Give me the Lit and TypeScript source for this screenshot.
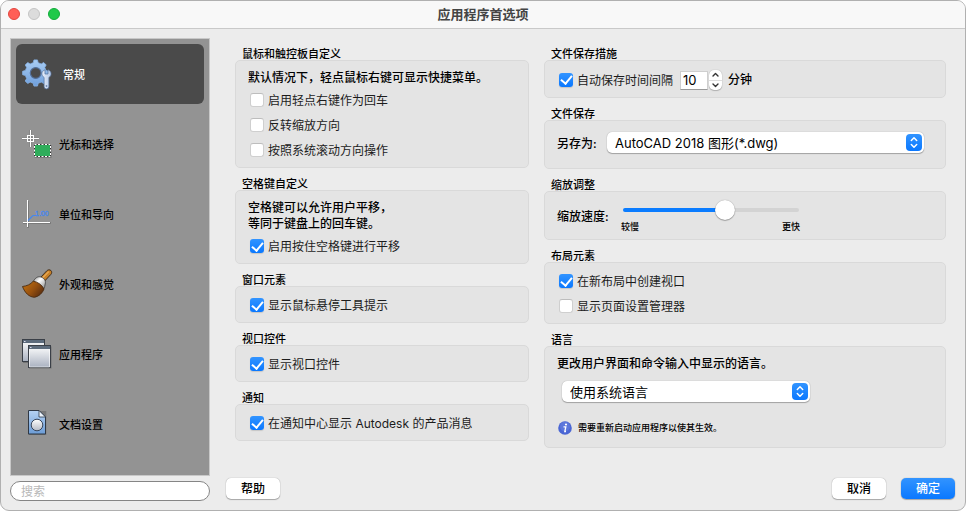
import { LitElement, html, css, svg, nothing, TemplateResult } from "lit";
import { customElement, property, state } from "lit/decorators.js";
import { classMap } from "lit/directives/class-map.js";
import { styleMap } from "lit/directives/style-map.js";

const controlStyles = css`
  * {
    box-sizing: border-box;
  }
  button,
  input,
  select {
    font: inherit;
    color: inherit;
    margin: 0;
  }
`;

/* Outline of a cog with the given number of teeth. */
function cogPath(cx: number, cy: number, outer: number, inner: number, teeth: number): string {
  const step = (Math.PI * 2) / teeth;
  const at = (r: number, a: number) =>
    `${(cx + r * Math.cos(a)).toFixed(2)} ${(cy + r * Math.sin(a)).toFixed(2)}`;
  let d = "";
  for (let i = 0; i < teeth; i++) {
    const a = i * step - Math.PI / 2;
    d += `${i ? "L" : "M"}${at(inner, a - step * 0.3)}L${at(outer, a - step * 0.17)}`;
    d += `L${at(outer, a + step * 0.17)}L${at(inner, a + step * 0.3)}`;
  }
  return d + "Z";
}

const icons: Record<string, TemplateResult> = {
  general: svg`
    <defs>
      <linearGradient id="cog" x1="0" y1="0" x2="0" y2="1">
        <stop offset="0" stop-color="#a9cdf3" /><stop offset="1" stop-color="#6f9fdc" />
      </linearGradient>
      <linearGradient id="wrench" x1="0" y1="0" x2="1" y2="0">
        <stop offset="0" stop-color="#e6eefb" /><stop offset="1" stop-color="#b3c6e4" />
      </linearGradient>
    </defs>
    <path d=${cogPath(13.7, 14, 13.2, 10.6, 8)} fill="url(#cog)" stroke="#86b2e6" stroke-width=".8" stroke-linejoin="round" />
    <circle cx="13.7" cy="14" r="5.4" fill="#4a4a4a" stroke="#54709a" stroke-width="1.2" />
    <path d="M23 10.800v4.200h3v-4.200c1.900.7 3.100 2.100 3.100 4 0 1.700-.9 2.900-2.200 3.600v9.100a2.300 2.300 0 0 1-4.800 0v-9.100c-1.300-.7-2.200-1.900-2.200-3.600 0-1.900 1.200-3.300 3.100-4Z"
      fill="url(#wrench)" stroke="#55719c" stroke-width=".7" />
    <circle cx="24.500" cy="27" r=".9" fill="#6d87b0" />`,
  cursor: svg`
    <rect x="12.500" y="16" width="17" height="13" fill="#666" opacity=".6" />
    <path d="M8.500 1v17M0 9.500h17" stroke="#6a6a6a" stroke-width="2.200" opacity=".5" />
    <path d="M8.500 1v17M0 9.500h17" stroke="#fff" />
    <rect x="5.500" y="6.500" width="6" height="6" fill="none" stroke="#fff" />
    <rect x="12.500" y="15.500" width="16" height="12" fill="#2fad5b" stroke="#333" />
    <rect x="12.500" y="15.500" width="16" height="12" fill="none" stroke="#fff" stroke-dasharray="2 1.500" />`,
  units: svg`
    <path d="M6 2v27M1 24h28" stroke="#555" stroke-width="2" opacity=".4" />
    <path d="M5.500 1v27M1 23.500h27" stroke="#fff" />
    <path d="M6 21.500l5-5h3" fill="none" stroke="#4687ee" stroke-width="1.200" />
    <text x="13" y="17" class="tiny">1.00</text>`,
  brush: svg`
    <defs>
      <linearGradient id="bristle" x1="0" y1="0" x2="1" y2=".6">
        <stop offset="0" stop-color="#c8760f" /><stop offset=".6" stop-color="#96500f" /><stop offset="1" stop-color="#5e3010" />
      </linearGradient>
      <linearGradient id="ferrule" x1="0" y1="0" x2="1" y2="1">
        <stop offset="0" stop-color="#888" /><stop offset=".4" stop-color="#fff" /><stop offset="1" stop-color="#888" />
      </linearGradient>
    </defs>
    <path d="M18.500 8.500l6.200-6.600c1.300-1.300 3-1.400 4.200-.4 1.100 1.100 1 2.800-.2 4.100l-6.400 6.800Z" fill="#c98127" stroke="#3f2b17" />
    <path d="M20.500 9l6.300-6.300" stroke="#e9ad59" stroke-width="1.200" />
    <path d="M11.500 12.500c1.300-3.500 4.500-5.500 7.500-4.500 3.500 1.300 5 4 4.200 7-.3 1.800-.6 3.300-1.400 4.800Z" fill="url(#ferrule)" stroke="#3d3d3d" stroke-width=".8" />
    <path d="M.5 17.500c4.500-.6 8-2 10.700-5.300 4.500.7 8.600 3.500 10.800 7.800-1.500 4-5 7.500-9.500 8.300C7 28 3 24 .5 17.500Z" fill="url(#bristle)" stroke="#4a2a10" stroke-width=".9" />`,
  windows: svg`
    <defs>
      <linearGradient id="pane" x1="0" y1="0" x2="0" y2="1">
        <stop offset="0" stop-color="#fff" /><stop offset="1" stop-color="#a9b1c0" />
      </linearGradient>
    </defs>
    <rect x="1" y="1" width="22" height="23" fill="#444" opacity=".4" />
    <rect x=".5" y=".5" width="22" height="22" fill="url(#pane)" stroke="#3a3f47" />
    <path d="M1 2.500h21" stroke="#5c6b7c" stroke-width="3" /><path d="M2 2.500h1.500" stroke="#dde" />
    <rect x="7" y="7.500" width="22.500" height="22" fill="#444" opacity=".4" />
    <rect x="6.500" y="6.500" width="22" height="22" fill="url(#pane)" stroke="#3a3f47" />
    <path d="M7 8.500h21" stroke="#5c6b7c" stroke-width="3" /><path d="M8 8.500h1.500" stroke="#dde" />
    <path d="M7.500 10.500v17.500h20V10.500" fill="none" stroke="#fff" opacity=".6" />`,
  document: svg`
    <defs>
      <linearGradient id="page" x1="0" y1="0" x2="0" y2="1">
        <stop offset="0" stop-color="#b5d2f3" /><stop offset="1" stop-color="#6c9cd6" />
      </linearGradient>
      <linearGradient id="disc" x1="0" y1="0" x2="0" y2="1">
        <stop offset="0" stop-color="#fff" /><stop offset="1" stop-color="#b4b9c4" />
      </linearGradient>
    </defs>
    <path d="M6.500 2h17.800v24H6.500Z" fill="#444" opacity=".35" />
    <path d="M6.500 1.500h10.500l6.500 6.500v17h-17Z" fill="url(#page)" stroke="#2f3845" />
    <path d="M17 1.500v6.500h6.500Z" fill="#eef5fd" stroke="#2f3845" stroke-width=".8" />
    <circle cx="15" cy="16" r="5.800" fill="url(#disc)" stroke="#39465a" />`,
};

@customElement("pref-group")
class PrefGroup extends LitElement {
  @property() heading = "";

  static styles = css`
    :host {
      display: block;
    }
    .group {
      border: 0;
      margin: 0;
      padding: 0;
      min-width: 0;
    }
    .title {
      display: block;
      box-sizing: border-box;
      height: 22px;
      padding: 10px 0 0 7px;
      font-size: 11px;
      font-weight: 500;
      line-height: 12px;
    }
    .box {
      border: 1px solid #d9d9d9;
      border-radius: 5px;
      background: #e4e4e4;
      padding: 6px 12px 4px;
    }
  `;

  render() {
    return html`<fieldset class="group">
      <legend class="title">${this.heading}</legend>
      <div class="box"><slot></slot></div>
    </fieldset>`;
  }
}

@customElement("pref-check")
class PrefCheck extends LitElement {
  @property() label = "";
  @property({ type: Boolean }) checked = false;

  static styles = [
    controlStyles,
    css`
      :host {
        display: block;
      }
      .row {
        display: flex;
        align-items: center;
        gap: 4px;
        height: 25px;
        padding: 0 0 1px 2px;
        color: #1c1c1c;
      }
      .caption {
        padding-top: 2px;
      }
      .tick {
        appearance: none;
        flex: none;
        display: grid;
        place-items: center;
        width: 14px;
        height: 14px;
        border: 1px solid #cfcfcf;
        border-top-color: #bdbdbd;
        border-radius: 3px;
        background: #fff;
      }
      .tick:checked {
        border: 0;
        background: linear-gradient(#3294ff, #0a78ff);
        box-shadow: 0 1px 1px #0002;
      }
      .tick:checked::after {
        content: "";
        width: 5px;
        height: 9px;
        margin-bottom: 2px;
        border: solid #fff;
        border-width: 0 2px 2px 0;
        transform: rotate(40deg);
      }
    `,
  ];

  render() {
    return html`<label class="row">
      <input class="tick" type="checkbox" .checked=${this.checked}
        @change=${(e: Event) => (this.checked = (e.target as HTMLInputElement).checked)} />
      <span class="caption">${this.label}</span>
    </label>`;
  }
}

@customElement("pref-select")
class PrefSelect extends LitElement {
  @property() label = "";
  @property({ attribute: false }) options: string[] = [];

  static styles = [
    controlStyles,
    css`
      :host {
        display: block;
      }
      .wrap {
        position: relative;
      }
      .menu {
        appearance: none;
        display: block;
        width: 100%;
        height: 21px;
        padding: 1px 24px 0 8px;
        border: 0;
        border-radius: 5px;
        background: #fff;
        box-shadow: 0 0 1px #0005, 0 1px 1px #0004;
        font-size: 13px;
      }
      .cap {
        position: absolute;
        top: 2px;
        right: 2px;
        pointer-events: none;
      }
    `,
  ];

  render() {
    return html`<div class="wrap">
      <select class="menu" aria-label=${this.label}>
        ${this.options.map((o) => html`<option>${o}</option>`)}
      </select>
      <svg class="cap" width="16" height="17" viewBox="0 0 16 17" aria-hidden="true">
        <defs>
          <linearGradient id="cap" x1="0" y1="0" x2="0" y2="1">
            <stop offset="0" stop-color="#3294ff" /><stop offset="1" stop-color="#0a78ff" />
          </linearGradient>
        </defs>
        <rect width="16" height="17" rx="4" fill="url(#cap)" />
        <path d="M5.300 6.500L8 3.800l2.700 2.700M5.300 10.500L8 13.200l2.700-2.700" fill="none" stroke="#fff" stroke-width="1.500" stroke-linecap="round" stroke-linejoin="round" />
      </svg>
    </div>`;
  }
}

@customElement("app-root")
class AppRoot extends LitElement {
  @state() private section = "general";
  @state() private speed = 59;
  @state() private minutes = 10;

  private sections = [
    { id: "general", name: "常规" },
    { id: "cursor", name: "光标和选择" },
    { id: "units", name: "单位和导向" },
    { id: "brush", name: "外观和感觉" },
    { id: "windows", name: "应用程序" },
    { id: "document", name: "文档设置" },
  ];

  static styles = [
    controlStyles,
    css`
      :host {
        display: block;
        background: #fff;
        color: #000;
        font: 12px/16px Inter, "Noto Sans CJK SC", sans-serif;
      }
      .window {
        display: flex;
        flex-direction: column;
        min-height: 100vh;
        border: 1px solid #b0b0b0;
        border-radius: 9px;
        background: #ececec;
        overflow: hidden;
      }
      .titlebar {
        display: grid;
        grid-template-columns: 1fr auto 1fr;
        align-items: center;
        height: 28px;
        padding: 0 7px 2px;
        border-bottom: 1px solid #c9c9c9;
        background: #f8f8f8;
      }
      .title {
        margin: 0;
        font-size: 13px;
        font-weight: 700;
        color: #444;
      }
      .lights {
        display: flex;
        gap: 8px;
      }
      .light {
        width: 12px;
        height: 12px;
        padding: 0;
        border: 1px solid #c4c4c4;
        border-radius: 50%;
        background: #dcdcdc;
      }
      .light.close {
        border-color: #e2463f;
        background: #ff5f57;
      }
      .light.grow {
        border-color: #12ac3a;
        background: #1fc94a;
      }
      .body {
        flex: 1;
        display: grid;
        grid-template-columns: 200px minmax(0, 1fr);
        padding: 9px 0 9px 9px;
      }
      .side {
        display: flex;
        flex-direction: column;
        gap: 5px;
      }
      .nav {
        flex: 1;
        display: flex;
        flex-direction: column;
        gap: 10px;
        padding: 5px;
        border: 1px solid #c8c8c8;
        background: #939393;
      }
      .item {
        display: flex;
        align-items: center;
        gap: 7px;
        height: 60px;
        padding: 0 6px;
        border: 0;
        border-radius: 6px;
        background: none;
        font-size: 11px;
        font-weight: 500;
      }
      .item.current {
        gap: 11px;
        background: #4a4a4a;
        color: #fff;
      }
      .name {
        padding-top: 2px;
      }
      .icon {
        flex: none;
        overflow: visible;
      }
      .tiny {
        font: 7px "Liberation Sans", sans-serif;
        fill: #4687ee;
        stroke: #4687ee;
        stroke-width: 0.3px;
      }
      .search {
        width: 100%;
        height: 20px;
        padding: 1px 10px 0;
        border: 1px solid #858585;
        border-radius: 10px;
        background: #fff;
      }
      .search::placeholder {
        color: #b8b8b8;
      }
      .main {
        display: flex;
        flex-direction: column;
        justify-content: space-between;
      }
      .groups {
        display: grid;
        grid-template-columns: minmax(0, 294fr) minmax(0, 402fr);
        gap: 15px;
        padding: 0 19px 0 25px;
      }
      .text {
        margin: 3px 0 2px;
        font-weight: 500;
      }
      .line {
        display: block;
      }
      .autosave {
        display: flex;
        align-items: center;
        height: 26px;
      }
      .autosave-check {
        min-width: 123px;
      }
      .minutes {
        width: 28px;
        height: 19px;
        padding: 0 2px;
        border: 1px solid #cfcfcf;
        border-bottom-color: #9a9a9a;
        background: #fff;
        font-size: 13px;
      }
      .stepper {
        display: flex;
        flex-direction: column;
        width: 13px;
        height: 20px;
        margin: 0 6px 0 1px;
        border-radius: 5px;
        background: #fff;
        box-shadow: 0 0 1px #0005, 0 1px 1px #0003;
      }
      .step {
        flex: 1;
        display: grid;
        place-items: center;
        min-height: 0;
        padding: 0;
        border: 0;
        background: none;
      }
      .step + .step {
        border-top: 1px solid #ddd;
      }
      .unit {
        font-weight: 500;
      }
      .save-as {
        display: flex;
        align-items: center;
        gap: 10px;
        margin: 5px 9px 11px 0;
      }
      .field-label {
        flex: none;
        min-width: 40px;
        padding-top: 2px;
        font-weight: 500;
      }
      .save-select {
        flex: 1;
      }
      .zoom {
        display: flex;
        align-items: center;
        gap: 12px;
        padding: 2px 0 1px;
      }
      .zoom-label {
        min-width: 54px;
        font-weight: 500;
      }
      .slider {
        width: 176px;
      }
      .range {
        appearance: none;
        display: block;
        width: 100%;
        height: 20px;
        background: none;
      }
      .range::-webkit-slider-runnable-track {
        height: 4px;
        border-radius: 2px;
        background: linear-gradient(to right, #0a7cff var(--fill), #d3d3d3 var(--fill));
      }
      .range::-webkit-slider-thumb {
        appearance: none;
        width: 20px;
        height: 20px;
        margin-top: -8px;
        border-radius: 50%;
        background: #fff;
        box-shadow: 0 0 1px #0006, 0 1px 1px #0004;
      }
      .scale {
        display: flex;
        justify-content: space-between;
        margin: 0 -1px 0 -2px;
        font-size: 9px;
        font-weight: 500;
        line-height: 14px;
      }
      .language {
        width: 248px;
        max-width: 100%;
        margin: 9px 0 19px 5px;
      }
      .note {
        display: flex;
        align-items: center;
        gap: 6px;
        margin: 0 0 8px 1px;
        font-size: 9px;
        font-weight: 500;
        line-height: 14px;
      }
      .footer {
        display: flex;
        gap: 15px;
        padding: 0 10px 2px 16px;
      }
      .button {
        width: 54px;
        height: 21px;
        padding: 1px 0 0;
        border: 0;
        border-radius: 5px;
        background: #fff;
        box-shadow: 0 0 1px #0006, 0 1px 1px #0004;
        font-weight: 500;
      }
      .button.help {
        margin-right: auto;
      }
      .button.primary {
        background: linear-gradient(#3294ff, #0a78ff);
        color: #fff;
      }
    `,
  ];

  private chevron(d: string) {
    return html`<svg width="7" height="5" viewBox="0 0 7 5" aria-hidden="true">
      <path d=${d} fill="none" stroke="#333" stroke-width="1.400" stroke-linecap="round" stroke-linejoin="round" />
    </svg>`;
  }

  render() {
    return html`
      <div class="window">
        <header class="titlebar">
          <div class="lights">
            <button class="light close" aria-label="关闭"></button>
            <button class="light" aria-label="最小化"></button>
            <button class="light grow" aria-label="缩放"></button>
          </div>
          <h1 class="title">应用程序首选项</h1>
        </header>
        <div class="body">
          <div class="side">
            <nav class="nav">
              ${this.sections.map(
                (s) => html`<button
                  class=${classMap({ item: true, current: s.id === this.section })}
                  aria-current=${s.id === this.section ? "page" : nothing}
                  @click=${() => (this.section = s.id)}
                >
                  <svg class="icon" width="30" height="30" viewBox="0 0 30 30" aria-hidden="true">${icons[s.id]}</svg>
                  <span class="name">${s.name}</span>
                </button>`
              )}
            </nav>
            <input class="search" type="text" placeholder="搜索" aria-label="搜索" />
          </div>
          <main class="main">
            <div class="groups">
              <div>
                <pref-group heading="鼠标和触控板自定义">
                  <p class="text">默认情况下，轻点鼠标右键可显示快捷菜单。</p>
                  <pref-check label="启用轻点右键作为回车"></pref-check>
                  <pref-check label="反转缩放方向"></pref-check>
                  <pref-check label="按照系统滚动方向操作"></pref-check>
                </pref-group>
                <pref-group heading="空格键自定义">
                  <p class="text">
                    <span class="line">空格键可以允许用户平移，</span>
                    <span class="line">等同于键盘上的回车键。</span>
                  </p>
                  <pref-check label="启用按住空格键进行平移" checked></pref-check>
                </pref-group>
                <pref-group heading="窗口元素">
                  <pref-check label="显示鼠标悬停工具提示" checked></pref-check>
                </pref-group>
                <pref-group heading="视口控件">
                  <pref-check label="显示视口控件" checked></pref-check>
                </pref-group>
                <pref-group heading="通知">
                  <pref-check label="在通知中心显示 Autodesk 的产品消息" checked></pref-check>
                </pref-group>
              </div>
              <div>
                <pref-group heading="文件保存措施">
                  <div class="autosave">
                    <pref-check class="autosave-check" label="自动保存时间间隔" checked></pref-check>
                    <input class="minutes" type="text" inputmode="numeric" aria-label="自动保存时间间隔（分钟）"
                      .value=${String(this.minutes)}
                      @change=${(e: Event) => (this.minutes = Number((e.target as HTMLInputElement).value) || 10)} />
                    <div class="stepper">
                      <button class="step" aria-label="增加" @click=${() => this.minutes++}>${this.chevron("M1 4l2.500-2.500L6 4")}</button>
                      <button class="step" aria-label="减少" @click=${() => (this.minutes = Math.max(1, this.minutes - 1))}>${this.chevron("M1 1l2.500 2.500L6 1")}</button>
                    </div>
                    <span class="unit">分钟</span>
                  </div>
                </pref-group>
                <pref-group heading="文件保存">
                  <div class="save-as">
                    <span class="field-label">另存为:</span>
                    <pref-select class="save-select" label="另存为" .options=${["AutoCAD 2018 图形(*.dwg)"]}></pref-select>
                  </div>
                </pref-group>
                <pref-group heading="缩放调整">
                  <div class="zoom">
                    <label class="zoom-label" for="speed">缩放速度:</label>
                    <div class="slider">
                      <input class="range" id="speed" type="range" min="0" max="100" .value=${String(this.speed)}
                        style=${styleMap({ "--fill": `${this.speed}%` })}
                        @input=${(e: Event) => (this.speed = Number((e.target as HTMLInputElement).value))} />
                      <div class="scale"><span>较慢</span><span>更快</span></div>
                    </div>
                  </div>
                </pref-group>
                <pref-group heading="布局元素">
                  <pref-check label="在新布局中创建视口" checked></pref-check>
                  <pref-check label="显示页面设置管理器"></pref-check>
                </pref-group>
                <pref-group heading="语言">
                  <p class="text">更改用户界面和命令输入中显示的语言。</p>
                  <pref-select class="language" label="语言" .options=${["使用系统语言"]}></pref-select>
                  <p class="note">
                    <svg width="14" height="14" viewBox="0 0 14 14" aria-hidden="true">
                      <circle cx="7" cy="7" r="6.800" fill="#4a66d4" />
                      <circle cx="7" cy="5.500" r="5" fill="#6d87e2" opacity=".5" />
                      <circle cx="8" cy="3.500" r="1.100" fill="#fff" />
                      <path d="M5.500 5.800h2.300l-1 4.700h1.200" fill="none" stroke="#fff" stroke-width="1.300" />
                    </svg>
                    <span>需要重新启动应用程序以使其生效。</span>
                  </p>
                </pref-group>
              </div>
            </div>
            <footer class="footer">
              <button class="button help">帮助</button>
              <button class="button">取消</button>
              <button class="button primary">确定</button>
            </footer>
          </main>
        </div>
      </div>
    `;
  }
}
